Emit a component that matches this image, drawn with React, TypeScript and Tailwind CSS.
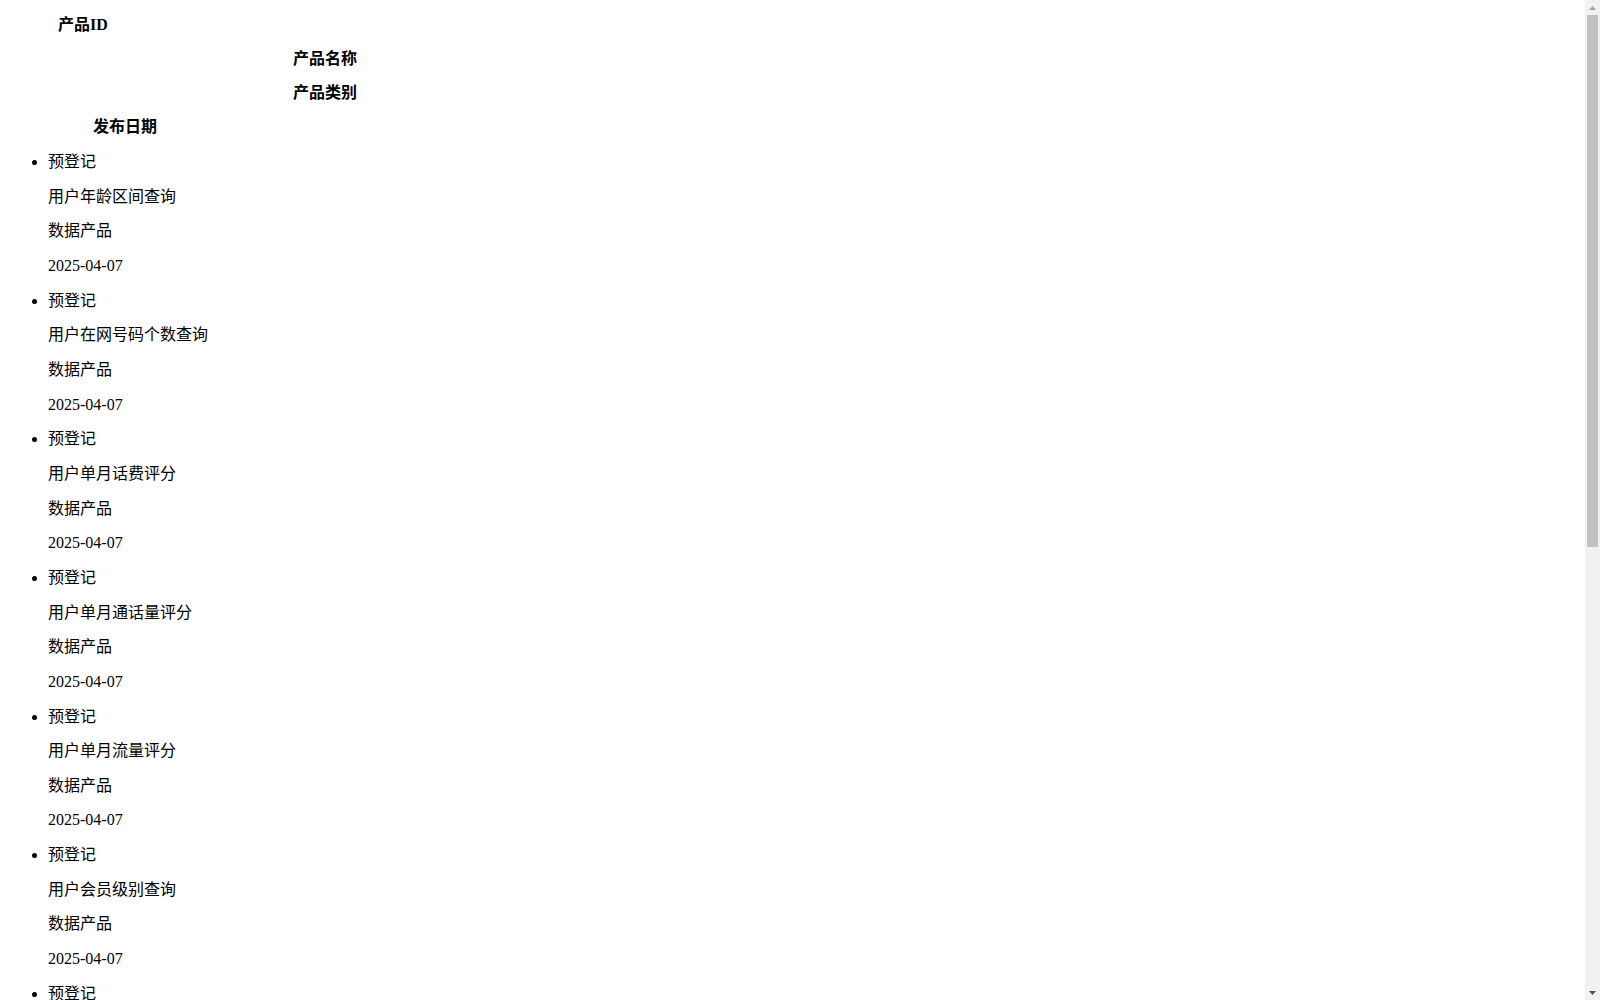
const products = [
  '用户年龄区间查询',
  '用户在网号码个数查询',
  '用户单月话费评分',
  '用户单月通话量评分',
  '用户单月流量评分',
  '用户会员级别查询',
  '用户终端品牌查询',
  '用户常驻城市查询',
  '用户入网时长查询',
  '用户实名状态验证',
  '用户欠费状态查询',
  '用户套餐类型查询',
];

function Scrollbar() {
  return (
    <div className="flex h-screen w-[15px] shrink-0 flex-col bg-[#f1f1f1]">
      <div className="flex h-[15px] items-center justify-center">
        <svg width="7" height="4" viewBox="0 0 7 4">
          <path d="M3.5 0L7 4H0z" fill="#a3a3a3" />
        </svg>
      </div>
      <div className="mx-[2px] h-[532px] bg-[#c1c1c1]" />
      <div className="flex-1" />
      <div className="flex h-[15px] items-center justify-center">
        <svg width="7" height="4" viewBox="0 0 7 4">
          <path d="M0 0H7L3.5 4z" fill="#505050" />
        </svg>
      </div>
    </div>
  );
}

export default function App() {
  return (
    <div className="flex h-screen overflow-hidden bg-white font-['Liberation_Serif','Noto_Sans_CJK_SC',serif] text-[16px] text-black">
      <div className="min-w-0 flex-1">
        <div className="flow-root px-2">
          {/* header cells, shown without table layout */}
          <div className="leading-[18px]">
            <div className="my-4 w-[150px] text-center font-bold">产品ID</div>
            <div className="my-4 w-[634px] text-center font-bold">产品名称</div>
            <div className="my-4 w-[634px] text-center font-bold">产品类别</div>
            <div className="my-4 w-[234px] text-center font-bold">发布日期</div>
          </div>

          <ul className="mt-[17px] mb-4 list-disc pl-10 leading-[18.65px]">
            {products.map((name) => (
              <li key={name}>
                <p className="my-4">预登记</p>
                <p className="my-4">{name}</p>
                <p className="my-4">数据产品</p>
                <p className="my-4">2025-04-07</p>
              </li>
            ))}
          </ul>
        </div>
      </div>
      <Scrollbar />
    </div>
  );
}
